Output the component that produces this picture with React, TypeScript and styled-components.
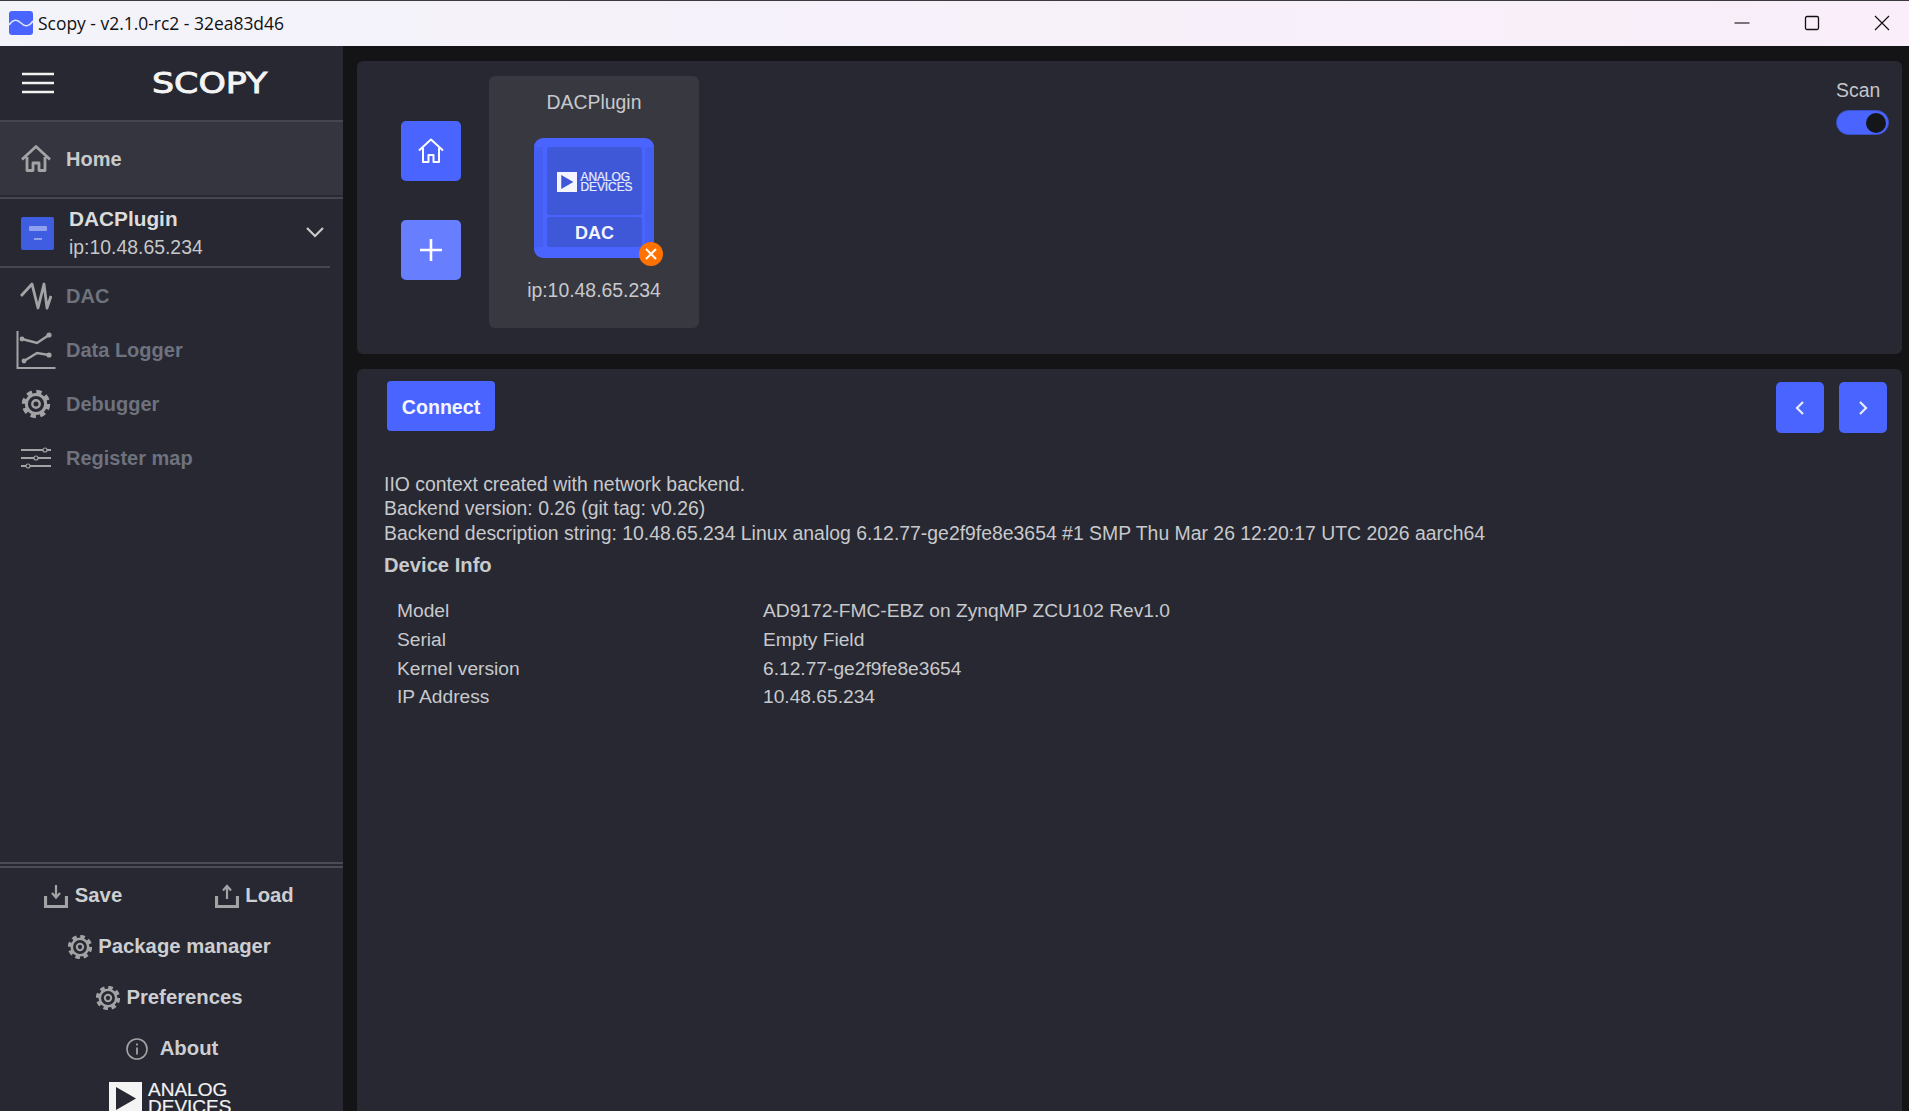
import React from 'react';
import styled, { createGlobalStyle } from 'styled-components';

const Global = createGlobalStyle`
  html, body { margin: 0; padding: 0; height: 100%; overflow: hidden; background: #141416; }
  * { box-sizing: border-box; }
  #root { width: 1909px; height: 1111px; }
`;
const Window = styled.div`
  width: 1909px; height: 1111px; display: flex; flex-direction: column; overflow: hidden;
  font-family: "Liberation Sans", Arial, sans-serif; background: #141416;
`;
const TitleBar = styled.div`
  height: 46px; flex: none; display: flex; align-items: center; padding: 0 0 2px 9px;
  border-top: 1px solid #3a3a3c; background: linear-gradient(90deg, #f3f3fa, #f9eef9);
`;
const AppIcon = styled.svg`width: 24px; height: 24px; flex: none;`;
const TitleText = styled.span`
  margin-left: 5px; font: 17.45px "Open Sans", sans-serif; color: #111; flex: 1;
`;
const WinControls = styled.div`display: flex; align-items: center; margin-right: 19px; gap: 54px;`;
const WinIcon = styled.svg`width: 16px; height: 16px; display: block;`;
const Body = styled.div`flex: 1; min-height: 0; display: flex;`;
const Sidebar = styled.aside`
  width: 343px; flex: none; background: #272831; display: flex; flex-direction: column; overflow: hidden;
`;
const SideHeader = styled.div`
  height: 76px; flex: none; display: flex; align-items: center; padding-left: 22px;
  border-bottom: 2px solid #45464f;
`;
const Burger = styled.svg`width: 32px; height: 24px;`;
const Wordmark = styled.span`
  margin-left: 98px; font: normal 29px "DejaVu Sans", sans-serif; color: #f4f4f4;
  -webkit-text-stroke: 0.9px #f4f4f4; display: inline-block; transform: scaleX(1.2); transform-origin: left center;
`;
const HomeRow = styled.div`
  height: 73px; flex: none; display: flex; align-items: center; padding: 1px 0 0 20px; background: #34353e; margin-bottom: 2px;
`;
const NavLabel = styled.span<{ $dim?: boolean; $gap?: number }>`
  margin-left: ${p => p.$gap ?? 14}px; font-weight: bold; font-size: 20px; color: ${p => (p.$dim ? '#6e727e' : '#c9cacb')};
`;
const NavIcon = styled.svg`width: 32px; height: 32px; flex: none; display: block;`;
const DeviceRow = styled.div`
  height: 71px; flex: none; display: flex; flex-direction: column; border-top: 2px solid #45464f;
`;
const DeviceInner = styled.div`
  flex: 1; width: 330px; display: flex; align-items: center; padding: 1px 0 0 21px; border-bottom: 2px solid #45464f;
`;
const DeviceThumb = styled.div`
  width: 33px; height: 33px; background: #3f5de0; border-radius: 2px; flex: none; display: flex;
  flex-direction: column; align-items: center; justify-content: center; gap: 7px;
`;
const ThumbLogo = styled.div`width: 18px; height: 5px; background: #8fa0ee; border-radius: 1px;`;
const ThumbTag = styled.div`width: 8px; height: 2px; background: #8fa0ee;`;
const DeviceText = styled.div`margin-left: 15px; display: flex; flex-direction: column; gap: 4px; flex: 1;`;
const DeviceName = styled.span`font-weight: bold; font-size: 20.8px; line-height: 24px; color: #dcdcdc;`;
const DeviceIp = styled.span`font-size: 19.4px; line-height: 24px; color: #c6c7c9;`;
const Chevron = styled.svg`width: 20px; height: 12px; margin: 0 5px 2px 0;`;
const NavList = styled.div`
  flex: 1; min-height: 0; display: flex; flex-direction: column; padding-top: 1px;
`;
const NavRow = styled.div<{ $wide?: boolean }>`
  height: 54px; flex: none; display: flex; align-items: center; padding-left: ${p => (p.$wide ? '16px' : '20px')};
`;
const WideIcon = styled.svg`width: 40px; height: 40px; flex: none; display: block;`;
const FootLines = styled.div`
  flex: none; height: 6px; border-top: 2px solid #4a4b54; border-bottom: 2px solid #4a4b54;
`;
const Footer = styled.div`flex: none; display: flex; flex-direction: column; height: 243px; padding-top: 2px;`;
const FootPair = styled.div`height: 51px; display: grid; grid-template-columns: 166px 1fr; flex: none;`;
const FootRow = styled.div<{ $gap?: number }>`
  height: 51px; flex: none; display: flex; align-items: center; justify-content: center; gap: ${p => p.$gap ?? 6}px;
  padding-right: ${p => (p.$gap ? 0 : 4)}px;
`;
const FootLabel = styled.span`font-weight: bold; font-size: 20.3px; color: #cdced2;`;
const FootIcon = styled.svg`width: 24px; height: 24px; flex: none; display: block;`;
const AdiLogo = styled.div`display: flex; align-items: flex-start; gap: 6px; padding: 8px 0 0 109px;`;
const AdiMark = styled.svg`width: 33px; height: 33px; flex: none; display: block;`;
const AdiText = styled.div`
  font-size: 19px; line-height: 17px; color: #f2f2f2; margin-top: -1px; -webkit-text-stroke: 0.2px #f2f2f2;
`;
const Content = styled.main`
  flex: 1; min-width: 0; display: flex; flex-direction: column; gap: 15px; padding: 15px 7px 0 14px;
`;
const TopPanel = styled.section`
  height: 293px; flex: none; background: #272831; border-radius: 6px; display: flex; padding: 15px 13px 0 0;
`;
const SideActions = styled.div`
  width: 132px; flex: none; display: flex; flex-direction: column; align-items: flex-end; padding: 45px 28.5px 0 0; gap: 39px;
`;
const SquareBtn = styled.button<{ $light?: boolean }>`
  width: 60px; height: 60px; padding: 0; border: 0; border-radius: 5px; display: flex; align-items: center; justify-content: center;
  background: ${p => (p.$light ? '#677eff' : '#4a64ff')};
`;
const BtnIcon = styled.svg`width: 32px; height: 32px; display: block;`;
const Card = styled.div`
  width: 210px; height: 252px; flex: none; background: #373840; border-radius: 6px; display: flex; flex-direction: column;
  align-items: center; color: #c8c9cc; font-size: 19.4px;
`;
const CardTitle = styled.div`height: 62px; line-height: 52px;`;
const DevIcon = styled.div`
  position: relative; width: 120px; height: 120px; background: #4a64ff; border-radius: 9px; padding: 9px 12px 11px 13px; flex: none;
  display: flex; flex-direction: column; gap: 2px;
`;
const Gutter = styled.div<{ $right?: boolean }>`
  position: absolute; top: 9px; bottom: 11px; width: 9px; background: #4560f0; ${p => (p.$right ? 'right: 0;' : 'left: 0;')}
`;
const DevTop = styled.div`
  height: 68px; flex: none; background: #3f58d8; border-radius: 3px; display: flex; align-items: center; justify-content: center; gap: 4px;
  padding-top: 2px;
`;
const MiniMark = styled.svg`width: 20px; height: 20px; display: block; flex: none;`;
const MiniText = styled.div`font-size: 12px; line-height: 10.5px; color: #e9ecff; letter-spacing: -0.1px; -webkit-text-stroke: 0.2px #e9ecff;`;
const DevBottom = styled.div`
  height: 30px; flex: none; background: #3f58d8; border-radius: 3px; display: flex; align-items: center; justify-content: center;
  color: #f3f4ff; font-weight: bold; font-size: 18px; padding-top: 2px;
`;
const CloseBadge = styled.div`
  position: absolute; right: -9px; bottom: -8px; width: 24px; height: 24px; border-radius: 50%; background: #ff7200;
  display: flex; align-items: center; justify-content: center;
`;
const CardIp = styled.div`margin-top: 19px; line-height: 26px;`;
const ScanBox = styled.div`
  margin-left: auto; width: 53px; display: flex; flex-direction: column; align-items: flex-start;
`;
const ScanLabel = styled.span`font-size: 19.4px; line-height: 28px; color: #c4c5c9;`;
const Switch = styled.div`
  width: 53px; height: 25px; margin-top: 6px; border-radius: 13px; background: #4a64ff; border: 1px solid #3c50c8; display: flex;
  align-items: center; justify-content: flex-end; padding-right: 2px;
`;
const Knob = styled.div`width: 20px; height: 20px; border-radius: 50%; background: #15161a;`;
const InfoPanel = styled.section`
  flex: 1; min-height: 0; background: #272831; border-radius: 6px 6px 0 0; padding: 12px 15px 0 30px; color: #c8c9cc; font-size: 19.4px;
`;
const ActionBar = styled.div`display: flex; align-items: flex-start; justify-content: space-between;`;
const Connect = styled.button`
  width: 108px; height: 50px; border: 0; border-radius: 4px; background: #4a64ff; color: #f4f5ff; font: bold 19.6px "Liberation Sans", sans-serif; padding: 2px 0 0;
`;
const Pager = styled.div`display: flex; gap: 15px; margin-top: 1px;`;
const PagerBtn = styled.button`
  width: 48px; height: 51px; border: 0; padding: 0; border-radius: 5px; background: #4a64ff; display: flex; align-items: center; justify-content: center;
`;
const LogBlock = styled.div`margin: 39px 0 0 -3px;`;
const LogLine = styled.div`height: 24.3px; line-height: 24.3px; white-space: nowrap;`;
const InfoHeading = styled.div`margin: 7px 0 0 -3px; height: 26px; line-height: 26px; font-weight: bold; font-size: 20.2px; color: #c9cacd;`;
const InfoTable = styled.div`
  margin: 19px 0 0 10px; display: grid; grid-template-columns: 366px 1fr; grid-auto-rows: 28.7px; align-items: center; font-size: 19.2px;
`;
const Cell = styled.span`white-space: nowrap;`;

const gearTeeth = (
  <>
    <circle cx="16" cy="16" r="12" fill="none" stroke="currentColor" strokeWidth="4.4" strokeDasharray="5.2 4.22" />
    <circle cx="16" cy="16" r="9.6" fill="none" stroke="currentColor" strokeWidth="3" />
    <circle cx="16" cy="16" r="3.7" fill="none" stroke="currentColor" strokeWidth="2.4" />
  </>
);
const grey = '#a3a3a5';

const TriMark = ({ bg, fg }: { bg: string; fg: string }) => (
  <>
    <rect width="33" height="33" fill={bg} />
    <path d="M7 5 L27 16.5 L7 28 Z" fill={fg} />
  </>
);

export default function App() {
  return (
    <Window>
      <Global />
      <TitleBar>
        <AppIcon viewBox="0 0 24 24">
          <rect width="24" height="24" rx="3" fill="#4a64ff" />
          <path d="M0 14 C4 8 8 8 12 12 S20 16 24 10" fill="none" stroke="#dfe5ff" strokeWidth="1.6" />
        </AppIcon>
        <TitleText>Scopy - v2.1.0-rc2 - 32ea83d46</TitleText>
        <WinControls>
          <WinIcon viewBox="0 0 16 16"><path d="M0.5 8h15" stroke="#111" strokeWidth="1.1" /></WinIcon>
          <WinIcon viewBox="0 0 16 16"><rect x="1.5" y="1.5" width="13" height="13" rx="1.5" fill="none" stroke="#111" strokeWidth="1.3" /></WinIcon>
          <WinIcon viewBox="0 0 16 16"><path d="M1 1l14 14M15 1L1 15" stroke="#111" strokeWidth="1.2" /></WinIcon>
        </WinControls>
      </TitleBar>
      <Body>
        <Sidebar>
          <SideHeader>
            <Burger viewBox="0 0 32 24">
              <path d="M0 3h32M0 12h32M0 21h32" stroke="#f2f2f2" strokeWidth="2.4" />
            </Burger>
            <Wordmark>SCOPY</Wordmark>
          </SideHeader>
          <HomeRow>
            <NavIcon viewBox="0 0 32 32">
              <path d="M2 16.5 L16 3.5 L30 16.5 M7 14 V27.5 H13 V20 H19 V27.5 H25 V14" fill="none" stroke={grey} strokeWidth="2.8" strokeLinejoin="round" />
            </NavIcon>
            <NavLabel>Home</NavLabel>
          </HomeRow>
          <DeviceRow>
            <DeviceInner>
              <DeviceThumb><ThumbLogo /><ThumbTag /></DeviceThumb>
              <DeviceText>
                <DeviceName>DACPlugin</DeviceName>
                <DeviceIp>ip:10.48.65.234</DeviceIp>
              </DeviceText>
              <Chevron viewBox="0 0 20 12"><path d="M2 2l8 8 8-8" fill="none" stroke="#c9c9c9" strokeWidth="2.2" /></Chevron>
            </DeviceInner>
          </DeviceRow>
          <NavList>
            <NavRow>
              <NavIcon viewBox="0 0 32 32">
                <path d="M1 16 L12 4 L18 28 L24 4 L27 28 L31 16" fill="none" stroke={grey} strokeWidth="2.8" strokeLinejoin="round" />
              </NavIcon>
              <NavLabel $dim>DAC</NavLabel>
            </NavRow>
            <NavRow $wide>
              <WideIcon viewBox="0 0 40 40">
                <path d="M1.5 1v37h38" fill="none" stroke={grey} strokeWidth="2" />
                <path d="M6 9 L21 13 L33 5 M8 31 L21 23 L33 25" fill="none" stroke={grey} strokeWidth="2.4" />
                <circle cx="6" cy="9" r="2.4" fill={grey} /><circle cx="33" cy="5" r="2.6" fill={grey} />
                <circle cx="8" cy="31" r="2.4" fill={grey} /><circle cx="33" cy="25" r="2.6" fill={grey} />
              </WideIcon>
              <NavLabel $dim $gap={10}>Data Logger</NavLabel>
            </NavRow>
            <NavRow>
              <NavIcon viewBox="0 0 32 32" style={{ color: grey }}>{gearTeeth}</NavIcon>
              <NavLabel $dim>Debugger</NavLabel>
            </NavRow>
            <NavRow>
              <NavIcon viewBox="0 0 32 32">
                <path d="M1 8h22M27 8h4M1 16h13M18 16h13M1 24h5M10 24h21" stroke={grey} strokeWidth="2" />
                <circle cx="25" cy="8" r="2" fill="none" stroke={grey} strokeWidth="1.2" />
                <circle cx="16" cy="16" r="2" fill="none" stroke={grey} strokeWidth="1.2" />
                <circle cx="8" cy="24" r="2" fill="none" stroke={grey} strokeWidth="1.2" />
              </NavIcon>
              <NavLabel $dim>Register map</NavLabel>
            </NavRow>
          </NavList>
          <FootLines />
          <Footer>
            <FootPair>
              <FootRow $gap={7}>
                <FootIcon viewBox="0 0 24 24">
                  <path d="M1.5 12v10.5h21V12" fill="none" stroke={grey} strokeWidth="3.2" />
                  <path d="M12 1v11M8 9l4 4.5 4-4.5" fill="none" stroke={grey} strokeWidth="2.2" />
                </FootIcon>
                <FootLabel>Save</FootLabel>
              </FootRow>
              <FootRow $gap={6}>
                <FootIcon viewBox="0 0 24 24">
                  <path d="M1.5 12v10.5h21V12" fill="none" stroke={grey} strokeWidth="3.2" />
                  <path d="M12 15V3M8 6.5L12 2l4 4.5" fill="none" stroke={grey} strokeWidth="2.2" />
                </FootIcon>
                <FootLabel>Load</FootLabel>
              </FootRow>
            </FootPair>
            <FootRow>
              <FootIcon viewBox="2 2 28 28" style={{ color: grey }}>{gearTeeth}</FootIcon>
              <FootLabel>Package manager</FootLabel>
            </FootRow>
            <FootRow>
              <FootIcon viewBox="2 2 28 28" style={{ color: grey }}>{gearTeeth}</FootIcon>
              <FootLabel>Preferences</FootLabel>
            </FootRow>
            <FootRow $gap={11}>
              <FootIcon viewBox="0 0 24 24">
                <circle cx="12" cy="12" r="10" fill="none" stroke={grey} strokeWidth="1.6" />
                <path d="M12 10.5v7M12 6.5v2" stroke={grey} strokeWidth="1.8" />
              </FootIcon>
              <FootLabel>About</FootLabel>
            </FootRow>
            <AdiLogo>
              <AdiMark viewBox="0 0 33 33"><TriMark bg="#f4f4f4" fg="#272831" /></AdiMark>
              <AdiText>ANALOG<br />DEVICES</AdiText>
            </AdiLogo>
          </Footer>
        </Sidebar>
        <Content>
          <TopPanel>
            <SideActions>
              <SquareBtn aria-label="Home">
                <BtnIcon viewBox="0 0 32 32">
                  <path d="M4 15.5 L16 4.5 L28 15.5 M8 13v14h5.5v-7h5v7H24V13" fill="none" stroke="#fff" strokeWidth="2" strokeLinejoin="round" />
                </BtnIcon>
              </SquareBtn>
              <SquareBtn $light aria-label="Add">
                <BtnIcon viewBox="0 0 32 32"><path d="M16 5v22M5 16h22" stroke="#fff" strokeWidth="2.6" /></BtnIcon>
              </SquareBtn>
            </SideActions>
            <Card>
              <CardTitle>DACPlugin</CardTitle>
              <DevIcon>
                <Gutter /><Gutter $right />
                <DevTop>
                  <MiniMark viewBox="0 0 33 33"><TriMark bg="#f4f5ff" fg="#3f58d8" /></MiniMark>
                  <MiniText>ANALOG<br />DEVICES</MiniText>
                </DevTop>
                <DevBottom>DAC</DevBottom>
                <CloseBadge>
                  <svg width="14" height="14" viewBox="0 0 14 14"><path d="M2 2l10 10M12 2L2 12" stroke="#fff" strokeWidth="2" /></svg>
                </CloseBadge>
              </DevIcon>
              <CardIp>ip:10.48.65.234</CardIp>
            </Card>
            <ScanBox>
              <ScanLabel>Scan</ScanLabel>
              <Switch><Knob /></Switch>
            </ScanBox>
          </TopPanel>
          <InfoPanel>
            <ActionBar>
              <Connect>Connect</Connect>
              <Pager>
                <PagerBtn aria-label="Previous">
                  <svg width="12" height="16" viewBox="0 0 12 16"><path d="M9 2L3 8l6 6" fill="none" stroke="#e8ebff" strokeWidth="2.2" /></svg>
                </PagerBtn>
                <PagerBtn aria-label="Next">
                  <svg width="12" height="16" viewBox="0 0 12 16"><path d="M3 2l6 6-6 6" fill="none" stroke="#e8ebff" strokeWidth="2.2" /></svg>
                </PagerBtn>
              </Pager>
            </ActionBar>
            <LogBlock>
              <LogLine>IIO context created with network backend.</LogLine>
              <LogLine>Backend version: 0.26 (git tag: v0.26)</LogLine>
              <LogLine>Backend description string: 10.48.65.234 Linux analog 6.12.77-ge2f9fe8e3654 #1 SMP Thu Mar 26 12:20:17 UTC 2026 aarch64</LogLine>
            </LogBlock>
            <InfoHeading>Device Info</InfoHeading>
            <InfoTable>
              <Cell>Model</Cell><Cell>AD9172-FMC-EBZ on ZynqMP ZCU102 Rev1.0</Cell>
              <Cell>Serial</Cell><Cell>Empty Field</Cell>
              <Cell>Kernel version</Cell><Cell>6.12.77-ge2f9fe8e3654</Cell>
              <Cell>IP Address</Cell><Cell>10.48.65.234</Cell>
            </InfoTable>
          </InfoPanel>
        </Content>
      </Body>
    </Window>
  );
}
